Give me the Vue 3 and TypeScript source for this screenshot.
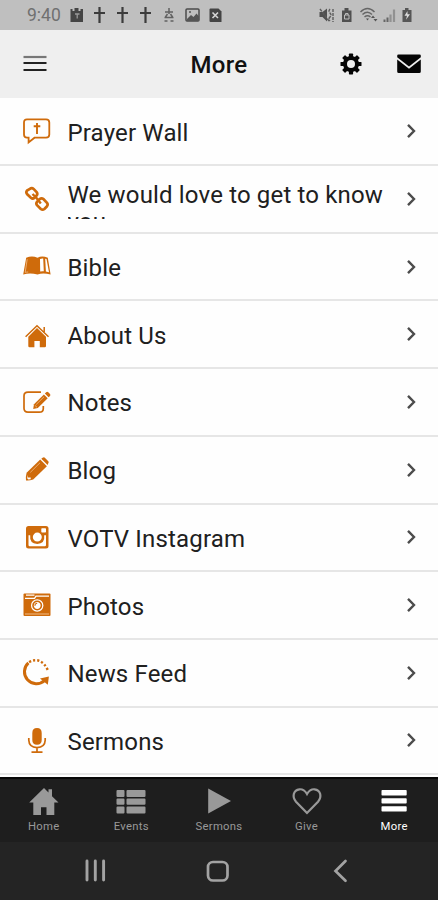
<script setup lang="ts">
interface Shape {
  d: string
  stroke?: number
  tone?: 'paper' | 'soft'
  dash?: string
}

interface Row {
  label: string
  icon: Shape[]
  long?: boolean
}

const rows: Row[] = [
  {
    label: 'Prayer Wall',
    icon: [
      { d: 'M5 2.3H24Q27.3 2.3 27.3 5.5V17.5Q27.3 20.7 24 20.7H12.5L6.6 25.4V20.7H5Q2 20.7 2 17.5V5.5Q2 2.3 5 2.3Z', stroke: 1.8 },
      { d: 'M15 6V17M11.7 9.2H18.3', stroke: 1.9 },
    ],
  },
  {
    label: 'We would love to get to know you',
    long: true,
    icon: [
      { d: 'M7.9 3.9Q9.8 2.3 11.6 3.9L14.6 7Q16 8.9 14.6 10.5L12.5 12.7Q10.7 14.3 8.9 12.7L5 9Q3.7 7.2 5 5.6Z', stroke: 2.7 },
      { d: 'M17.7 14.1Q19.6 12.5 21.4 14.1L25 17.8Q26.3 19.6 25 21.3L22.4 24Q20.6 25.4 18.8 24L15 20.2Q13.7 18.4 15 16.8Z', stroke: 2.7 },
      { d: 'M10.5 9L14.5 13L18.8 18.5', stroke: 2.4 },
    ],
  },
  {
    label: 'Bible',
    icon: [
      { d: 'M4.2 5.8Q10 3.4 15.5 5.8Q20 3.4 25.8 5.8L28.6 22.6Q21 20.4 15.5 22.6Q8 20.4 1.2 22.6Z' },
      { d: 'M18 7.1Q19.8 6.3 21.2 6.6L21.8 19.3Q19.8 19 18.2 19.6Z', tone: 'paper' },
      { d: 'M23.2 6.8L24.5 7.1L27 20.3L23.9 19.4Z', tone: 'paper' },
      { d: 'M5.2 7.2L3.2 20.4Q4.8 20 6.2 20', tone: 'soft', stroke: 0.9 },
    ],
  },
  {
    label: 'About Us',
    icon: [
      { d: 'M15 8L24 16.7V26Q24 27.2 22.8 27.2H17.8V21H12.4V27.2H7.5Q6.3 27.2 6.3 26V16.7Z' },
      { d: 'M3.6 16.7L15 5.8L26.5 16.7M22.2 7V12', stroke: 1.5 },
    ],
  },
  {
    label: 'Notes',
    icon: [
      { d: 'M19 4.2H6Q2 4.2 2 8V20.3Q2 24.2 6 24.2H17.3Q21.3 24.2 21.3 20.5V18', stroke: 1.7 },
      { d: 'M12 16.3L21.9 6.5L25.7 10.2L15.8 20L11.2 21Z' },
      { d: 'M22.9 5.5L24.2 4.2Q25.3 3.3 26.3 4.3L28 6Q28.8 7 28 7.9L26.6 9.2Z' },
      { d: 'M14.2 16.5L22 8.8M12.8 17.3L15 19.3', tone: 'soft', stroke: 0.9 },
    ],
  },
  {
    label: 'Blog',
    icon: [
      { d: 'M4.6 17.8L18.2 4.6L24.9 11.2L11.2 24.6Q7 25.8 4 25.4Q3.5 22 4.6 17.8Z' },
      { d: 'M19.3 3.7L20.6 2.8Q22 1.9 23.1 2.9L26.3 6.2Q27.2 7.2 26.2 8.4L25.6 10Z' },
      { d: 'M6 19.800V22.500H8.700V24.200L6.300 24.400L5.200 23.200Z', tone: 'paper' },
      { d: 'M8.3 17.4L18 7.8', tone: 'soft', stroke: 0.9 },
    ],
  },
  {
    label: 'VOTV Instagram',
    icon: [
      { d: 'M6.5 3H24Q26.5 3 26.5 5.5V23Q26.5 25.5 24 25.5H6.5Q4 25.5 4 23V5.5Q4 3 6.5 3Z' },
      { d: 'M6.5 12.3H8.2Q7.3 20.7 15.2 21Q23.2 20.7 22.2 12.3H24V22Q24 23.2 22.8 23.2H7.7Q6.5 23.2 6.5 22Z', tone: 'paper' },
      { d: 'M10.8 14.1A4.5 4.5 0 1 0 19.8 14.1A4.5 4.5 0 1 0 10.8 14.1ZM20 5.3H23.3Q24 5.3 24 6V8.8Q24 9.5 23.3 9.5H20Q19.3 9.5 19.3 8.8V6Q19.3 5.3 20 5.3Z', tone: 'paper' },
    ],
  },
  {
    label: 'Photos',
    icon: [
      { d: 'M2.5 2.5H27.5Q28.5 2.5 28.5 3.5V24Q28.5 25 27.5 25H2.5Q1.5 25 1.5 24V3.5Q1.5 2.5 2.5 2.5Z' },
      { d: 'M4 4.2H12.5M3 7.4H12.5L14 5.2H27', tone: 'paper', stroke: 1.3 },
      { d: 'M3 23H27', tone: 'soft', stroke: 1.1 },
      { d: 'M9 14.5A6.2 6.2 0 1 0 21.4 14.5A6.2 6.2 0 1 0 9 14.5Z', tone: 'paper' },
      { d: 'M11 14.5A4.2 4.2 0 1 0 19.4 14.5A4.2 4.2 0 1 0 11 14.5Z', stroke: 1.6 },
      { d: 'M12.9 14.7Q12.9 12.4 15.2 12.2', stroke: 1.1 },
    ],
  },
  {
    label: 'News Feed',
    icon: [
      { d: 'M6.4 4.8A11 11 0 1 0 22.500 22.6', stroke: 3 },
      { d: 'M18 20.4L26.9 18.6L25.8 26.8Z' },
      { d: 'M7 4Q19 -2 25.8 12', stroke: 2.4, dash: '2.2 2' },
    ],
  },
  {
    label: 'Sermons',
    icon: [
      { d: 'M15 2Q19.700 2 19.700 7V14Q19.700 18.800 15 18.800Q10.300 18.800 10.300 14V7Q10.300 2 15 2Z' },
      { d: 'M6.8 12V14.2Q7.1 21.3 15 21.6Q22.900 21.3 23.2 14.2V12M15 21.6V26M9.5 26.2H20.500', stroke: 1.7 },
    ],
  },
]

interface Tab {
  label: string
  d: string
  outline?: boolean
  active?: boolean
}

const tabs: Tab[] = [
  { label: 'Home', d: 'M16 1L20.5 5.500V2.300H24V9.2L30.5 15.500H26.3V28H18.5V20.300H13V28H5.3V15.500H1.2Z' },
  {
    label: 'Events',
    d: 'M2.5 3H8.5Q9.5 3 9.5 4V9Q9.5 10 8.5 10H2.5Q1.5 10 1.5 9V4Q1.5 3 2.5 3ZM12.5 3H29.5Q30.5 3 30.5 4V9Q30.5 10 29.5 10H12.5Q11.5 10 11.5 9V4Q11.5 3 12.5 3ZM2.5 11.6H8.5Q9.5 11.6 9.5 12.6V16.8Q9.5 17.8 8.5 17.8H2.5Q1.5 17.8 1.5 16.8V12.6Q1.5 11.6 2.5 11.6ZM12.5 11.6H29.5Q30.5 11.6 30.5 12.6V16.8Q30.5 17.8 29.5 17.8H12.5Q11.5 17.8 11.5 16.8V12.6Q11.5 11.6 12.5 11.6ZM2.5 19.4H8.5Q9.5 19.4 9.5 20.4V25.4Q9.5 26.4 8.5 26.4H2.5Q1.5 26.4 1.5 25.4V20.4Q1.5 19.4 2.5 19.4ZM12.5 19.4H29.5Q30.5 19.4 30.5 20.4V25.4Q30.5 26.4 29.5 26.4H12.5Q11.5 26.4 11.5 25.4V20.4Q11.5 19.4 12.5 19.4Z',
  },
  { label: 'Sermons', d: 'M5.2 1.500L28 14L5.2 26.500Z' },
  { label: 'Give', d: 'M16 26L5 14.7C1 10.2 2 3 8.5 2.3C12 2 14.5 4.5 16 7C17.5 4.5 20 2 23.5 2.3C30 3 31 10.2 27 14.7Z', outline: true },
  { label: 'More', d: 'M4.3 3H27.9Q28.7 3 28.7 3.8V7.7Q28.7 8.5 27.9 8.5H4.3Q3.5 8.5 3.5 7.7V3.8Q3.5 3 4.3 3ZM4.3 11.3H27.9Q28.7 11.3 28.7 12.1V15.7Q28.7 16.5 27.9 16.5H4.3Q3.5 16.5 3.5 15.7V12.1Q3.5 11.3 4.3 11.3ZM4.3 19.3H27.9Q28.7 19.3 28.7 20.1V23.7Q28.7 24.5 27.9 24.5H4.3Q3.5 24.5 3.5 23.7V20.1Q3.5 19.3 4.3 19.3Z', active: true },
]
</script>

<template>
  <div class="screen">
    <div class="status">
      <span class="clock">9:40</span>
      <svg class="notices" width="160" height="29" viewBox="66 0 160 29">
        <path d="M70.500 9h2v2h2V8h4v3h2V9h2.500v13H70.500z" fill="#454545" />
        <path d="M75 14h4.500M77.200 14v4.500" stroke="#999" stroke-width="1.300" />
        <path d="M99.500 7v16M94 13h11M122.500 7v16M117 13h11M145.500 7v16M140 13h11" stroke="#3c3c3c" stroke-width="2.200" />
        <path d="M169 8v6M165 12h8M167.500 14l-2 3M170.500 14l2 3M164.500 17.500h9M164.500 21h3M170.500 21h3" stroke="#626262" stroke-width="1.500" fill="none" />
        <rect x="186" y="9" width="13" height="12" rx="1" fill="none" stroke="#4c4c4c" stroke-width="1.500" />
        <path d="M187 19l4-4 2.500 2 3-3.500 2.500 3V21H187z" fill="#555" />
        <circle cx="190" cy="12" r="1" fill="#555" />
        <path d="M210.500 8.500h8l3 3V22h-11q-1 0-1-1V9.500q0-1 1-1z" fill="#444" />
        <path d="M212.500 12.500l5.500 5.500M218 12.500l-5.500 5.500" stroke="#d5d5d5" stroke-width="1.600" />
      </svg>
      <svg class="signals" width="98" height="29" viewBox="316 0 98 29">
        <path d="M319.500 12h3l4.500-3.500v13l-4.500-4.500h-3z" fill="#505050" />
        <path d="M320 9l9 12M330 9q-2 2 0 4t0 4t0 4M333 9v13" stroke="#5c5c5c" stroke-width="1.400" fill="none" stroke-dasharray="3 1" />
        <path d="M342 10.500h2.500V8h4v2.500h3V22H342z" fill="#505050" />
        <path d="M344.500 15h4.500v4h-4.500zM345.500 15v-1.500h2.500V15" fill="none" stroke="#bbb" />
        <path d="M360.500 12Q367.500 5 374.500 12M362.500 14.500Q367.500 10 372 14.500M364.500 17Q367.500 14.500 370.500 17" stroke="#666" stroke-width="1.500" fill="none" />
        <path d="M366 18.500h3l-1.500 2zM371 18h4l-2-2.500zM373.500 19h4l-2 2.500z" fill="#555" />
        <path d="M384.500 19.500V22M387.500 17.500V22" stroke="#666" stroke-width="2" />
        <path d="M390.500 14.500V22M394 9.500V22" stroke="#919191" stroke-width="2.200" />
        <path d="M402.500 10h2.500V8h3.500v2h3v12h-9z" fill="#565656" />
        <path d="M407.500 11l-3 4.800h2.500l-1 4 4-5.500h-2.500z" fill="#ddd" />
      </svg>
    </div>

    <header class="topbar">
      <svg class="burger" width="24" height="20" viewBox="0 0 24 20">
        <path d="M.5 3h23" stroke="#777" stroke-width="2.200" />
        <path d="M.5 9h23M.5 16h23" stroke="#222" stroke-width="2" />
      </svg>
      <h1>More</h1>
      <svg class="gear" width="22" height="22" viewBox="-11 -11 22 22">
        <g fill="#050505">
          <rect v-for="n in 4" :key="n" x="-2.100" y="-10.500" width="4.200" height="21" rx=".7" :transform="`rotate(${n * 45})`" />
          <circle r="8" />
        </g>
        <circle r="4" fill="#efefef" />
      </svg>
      <svg class="mail" width="24" height="20" viewBox="0 0 24 20">
        <path d="M1.500 .5h21q1.300 0 1.300 1.300v1.500L12 12.500.2 3.300V1.800Q.2.500 1.500.5z" fill="#050505" />
        <path d="M.2 5.500L12 14.700 23.800 5.500v12q0 1.500-1.500 1.500H1.700Q.2 19 .2 17.500z" fill="#050505" />
      </svg>
    </header>

    <ul class="list">
      <li v-for="row in rows" :key="row.label" class="row">
        <svg class="row-icon" width="30" height="30" viewBox="0 0 30 30">
          <path
            v-for="(s, i) in row.icon"
            :key="i"
            :d="s.d"
            :class="[s.stroke ? 'line' : 'solid', s.tone]"
            :stroke-width="s.stroke"
            :stroke-dasharray="s.dash"
          />
        </svg>
        <span class="label" :class="{ long: row.long }">{{ row.label }}</span>
        <svg class="chevron" width="12" height="16" viewBox="0 0 12 16">
          <path d="M2 1.800L8 8 2 14.200" />
        </svg>
      </li>
    </ul>

    <nav class="tabs">
      <div v-for="tab in tabs" :key="tab.label" class="tab" :class="{ active: tab.active }">
        <svg width="32" height="30" viewBox="0 0 32 30">
          <path :d="tab.d" :class="tab.outline ? 'line' : 'solid'" stroke-width="2.200" />
        </svg>
        <span>{{ tab.label }}</span>
      </div>
    </nav>

    <div class="system">
      <svg width="438" height="58" viewBox="0 0 438 58">
        <path d="M87 19v19M95.300 19v19M103.600 19v19" stroke-width="2.900" />
        <rect x="208" y="20" width="19.500" height="18.500" rx="5" stroke-width="2.700" />
        <path d="M345.500 19L335.500 29l10 9.700" stroke-width="2.700" />
      </svg>
    </div>
  </div>
</template>

<style>
body {
  margin: 0;
  background: #fefefe;
}
</style>

<style scoped>
.screen {
  display: flex;
  flex-direction: column;
  width: 438px;
  height: 900px;
  overflow: hidden;
  background: #fefefe;
  font-family: Roboto, "Liberation Sans", sans-serif;
}
svg {
  display: block;
  flex: none;
}
.status {
  display: flex;
  flex: none;
  height: 29.5px;
  background: #bfbfbf;
}
.clock {
  width: 39px;
  padding-left: 27px;
  font-size: 17.5px;
  line-height: 31px;
  color: #707070;
}
.signals {
  margin-left: 90px;
}
.topbar {
  display: flex;
  flex: none;
  align-items: center;
  height: 68.5px;
  background: #efefef;
}
.burger {
  margin-left: 22.5px;
}
h1 {
  width: 58px;
  margin: 2px 0 0 144px;
  font-size: 24px;
  font-weight: 500;
  line-height: 30px;
  letter-spacing: 0.3px;
  white-space: nowrap;
  color: #111;
}
.gear {
  margin-left: 91px;
}
.mail {
  margin-left: 35.5px;
}
.list {
  flex: none;
  box-sizing: border-box;
  height: 679px;
  margin: 0;
  padding: 0.4px 0 0;
  list-style: none;
}
.row {
  display: flex;
  align-items: center;
  box-sizing: border-box;
  height: 67.7px;
  padding-left: 22px;
  border-bottom: 2px solid #e6e6e6;
}
.row-icon {
  margin-top: 1.5px;
  color: #cf6b0b;
}
.solid {
  fill: currentColor;
}
.line {
  fill: none;
  stroke: currentColor;
}
.paper {
  color: #fff;
}
.soft {
  color: #eeb47d;
}
.label {
  width: 324px;
  margin: 3px 0 0 15.5px;
  overflow: hidden;
  font-size: 24px;
  line-height: 28px;
  letter-spacing: 0.16px;
  color: #202020;
}
.long {
  height: 37px;
  margin-top: 4px;
  line-height: 27px;
}
.chevron {
  margin-left: 14px;
  fill: none;
  stroke: #4c4c4c;
  stroke-width: 2.4;
}
.tabs {
  display: flex;
  flex: none;
  box-sizing: border-box;
  height: 65px;
  border-top: 2px solid #080808;
  background: #1e1e1e;
}
.tab {
  display: flex;
  flex: 1;
  flex-direction: column;
  align-items: center;
  padding-top: 8px;
  color: #999;
}
.tab span {
  margin-top: 2.5px;
  font-size: 11.3px;
  line-height: 13px;
  letter-spacing: 0.3px;
}
.active {
  color: #fff;
}
.system {
  flex: none;
  height: 58px;
  background: #242424;
}
.system svg {
  fill: none;
  stroke: #a3a3a3;
  stroke-linecap: round;
}
</style>
